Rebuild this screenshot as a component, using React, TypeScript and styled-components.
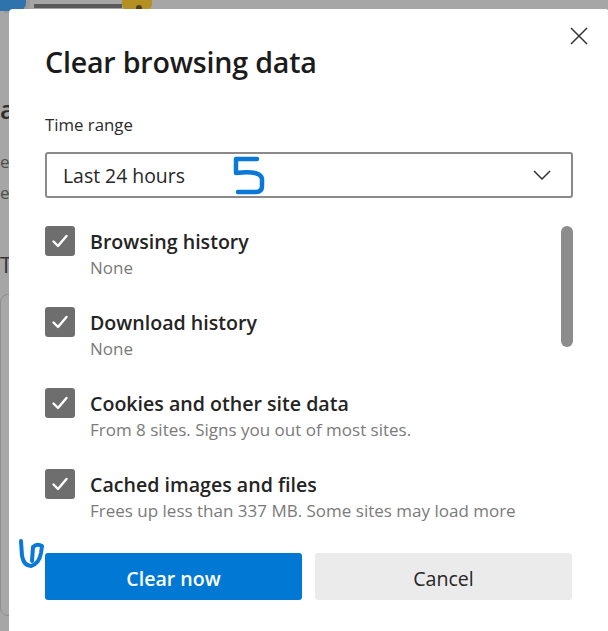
import React from "react";
import styled, { createGlobalStyle } from "styled-components";

const GlobalStyle = createGlobalStyle`
  html, body { margin: 0; padding: 0; background: #a6a6a6; overflow: hidden; }
  * { box-sizing: border-box; }
`;

const FONT = `"Open Sans", "Noto Sans", "Liberation Sans", sans-serif`;

const Page = styled.div`
  position: relative;
  width: 608px;
  height: 631px;
  overflow: hidden;
  background: #a6a6a6;
  font-family: ${FONT};
`;

/* ---------- dimmed page behind the modal ---------- */
const Behind = styled.div`
  display: flex;
  flex-direction: column;
  height: 100%;
`;

const TopStrip = styled.div`
  display: flex;
  align-items: flex-start;
  height: 12px;
`;

const BlueTile = styled.div`
  width: 26px;
  height: 14px;
  margin-top: -3px;
  background: #2f73ad;
  border-radius: 0 0 8px 0;
  box-shadow: 4px 2px 0 0 #9a9a9a;
`;

const DarkBar = styled.div`
  width: 88px;
  height: 4px;
  margin: 4px 0 0 8px;
  background: #5a5a5a;
`;

const YellowTile = styled.div`
  position: relative;
  width: 30px;
  height: 10px;
  background: #b48f22;
  border-radius: 0 0 6px 6px;
  &::after {
    content: "";
    position: absolute;
    left: 14px;
    top: 5px;
    width: 6px;
    height: 5px;
    border-radius: 3px 3px 0 0;
    background: #4a4020;
  }
`;

const SideColumn = styled.div`
  display: flex;
  flex-direction: column;
  width: 200px;
  color: #333;
`;

const SideHeading = styled.div`
  margin-top: 82px;
  font-size: 26px;
  font-weight: 600;
  line-height: 30px;
  white-space: nowrap;
  color: #2e2e2e;
`;

const SideText = styled.div`
  margin-top: 22px;
  font-size: 17px;
  line-height: 31px;
  white-space: nowrap;
  color: #4e4e4e;
`;

const SideLetter = styled.div`
  margin-top: 44px;
  font-size: 22px;
  line-height: 24px;
  color: #333;
`;

const SideCard = styled.div`
  margin-top: 18px;
  width: 200px;
  height: 322px;
  border: 1px solid #8e8e8e;
  border-radius: 8px;
  background: #a8a8a8;
`;

/* ---------- modal ---------- */
const Dialog = styled.div`
  position: absolute;
  left: 9px;
  top: 9px;
  width: 600px;
  height: 640px;
  background: #ffffff;
  border-radius: 4px;
  padding: 0 36px 0 36px;
  display: flex;
  flex-direction: column;
  color: #1f1f1f;
`;

const Header = styled.div`
  display: flex;
  align-items: flex-start;
  justify-content: space-between;
  padding-top: 34px;
`;

const Title = styled.h1`
  margin: 0;
  font-size: 28.6px;
  font-weight: 600;
  line-height: 38px;
  letter-spacing: -0.2px;
  color: #1b1b1b;
`;

const CloseButton = styled.button`
  display: flex;
  align-items: center;
  justify-content: center;
  width: 20px;
  height: 20px;
  margin: -17px -16px 0 0;
  padding: 0;
  border: 0;
  background: transparent;
  color: #333;
`;

const FieldLabel = styled.div`
  margin-top: 33px;
  font-size: 16.8px;
  line-height: 22px;
  color: #2b2b2b;
`;

const SelectBox = styled.div`
  position: relative;
  display: flex;
  align-items: center;
  justify-content: space-between;
  margin-top: 16px;
  height: 46px;
  padding: 0 20px 0 16px;
  border: 2px solid #8a8a8a;
  border-radius: 3px;
  font-size: 19.4px;
  color: #262626;
`;

const Annotation = styled.svg`
  position: absolute;
  overflow: visible;
  pointer-events: none;
`;

const ListArea = styled.div`
  position: relative;
  margin-top: 28px;
  height: 310px;
  overflow: hidden;
`;

const ScrollThumb = styled.div`
  position: absolute;
  right: 0;
  top: 0;
  width: 12px;
  height: 121px;
  border-radius: 6px;
  background: #8c8c8c;
`;

const Item = styled.div`
  display: flex;
  align-items: flex-start;
  gap: 15px;
  height: 81px;
`;

const Check = styled.div`
  flex: none;
  display: flex;
  align-items: center;
  justify-content: center;
  width: 30px;
  height: 30px;
  border-radius: 3px;
  background: #6e6e6e;
`;

const ItemText = styled.div`
  display: flex;
  flex-direction: column;
  padding-top: 1px;
`;

const ItemTitle = styled.div`
  font-size: 19.6px;
  font-weight: 600;
  line-height: 30px;
  color: #242424;
`;

const ItemSub = styled.div`
  font-size: 17px;
  line-height: 22px;
  color: #7a7a7a;
`;

const Buttons = styled.div`
  position: relative;
  display: grid;
  grid-template-columns: 1fr 1fr;
  gap: 13px;
  margin-top: 17px;
  width: 527px;
`;

const Button = styled.button<{ $primary?: boolean }>`
  height: 47px;
  padding: 3px 0 0;
  border: 0;
  border-radius: 3px;
  font-family: ${FONT};
  font-size: 19.6px;
  font-weight: ${(p) => (p.$primary ? 600 : 400)};
  background: ${(p) => (p.$primary ? "#0078d4" : "#ebebeb")};
  color: ${(p) => (p.$primary ? "#ffffff" : "#262626")};
`;

const CheckIcon = () => (
  <svg width="18" height="18" viewBox="0 0 18 18">
    <path d="M2.5 9.5 L7 14 L15.5 4" fill="none" stroke="#fff" strokeWidth="2.4" strokeLinecap="round" strokeLinejoin="round" />
  </svg>
);

const items = [
  { title: "Browsing history", sub: "None" },
  { title: "Download history", sub: "None" },
  { title: "Cookies and other site data", sub: "From 8 sites. Signs you out of most sites." },
  { title: "Cached images and files", sub: "Frees up less than 337 MB. Some sites may load more" },
];

export default function App() {
  return (
    <Page>
      <GlobalStyle />
      <Behind>
        <TopStrip>
          <BlueTile />
          <DarkBar />
          <YellowTile />
        </TopStrip>
        <SideColumn>
          <SideHeading>a</SideHeading>
          <SideText>eb<br />e</SideText>
          <SideLetter>T</SideLetter>
          <SideCard />
        </SideColumn>
      </Behind>

      <Dialog>
        <Header>
          <Title>Clear browsing data</Title>
          <CloseButton aria-label="Close">
            <svg width="18" height="18" viewBox="0 0 18 18">
              <path d="M1 1 L17 17 M17 1 L1 17" stroke="#333" strokeWidth="1.5" fill="none" />
            </svg>
          </CloseButton>
        </Header>

        <FieldLabel>Time range</FieldLabel>
        <SelectBox>
          <span>Last 24 hours</span>
          <svg width="18" height="10" viewBox="0 0 18 10">
            <path d="M1 1 L9 9 L17 1" stroke="#333" strokeWidth="1.5" fill="none" />
          </svg>
          <Annotation width="40" height="40" style={{ left: 185, top: 1 }}>
            <path
              d="M25 4 L4 4 L4 18 Q29 15 30 24 L30 31 Q30 37 24 37 L6 37"
              fill="none"
              stroke="#0a78d7"
              strokeWidth="4.5"
              strokeLinecap="round"
              strokeLinejoin="round"
            />
          </Annotation>
        </SelectBox>

        <ListArea>
          {items.map((it) => (
            <Item key={it.title}>
              <Check>
                <CheckIcon />
              </Check>
              <ItemText>
                <ItemTitle>{it.title}</ItemTitle>
                <ItemSub>{it.sub}</ItemSub>
              </ItemText>
            </Item>
          ))}
          <ScrollThumb />
        </ListArea>

        <Buttons>
          <Annotation width="30" height="32" style={{ left: -26, top: -14 }}>
            <path
              d="M2 2 L3 17 Q5 27 12 27 Q20 25 22 14 L23 7 Q18 4 14 8 L13 22"
              fill="none"
              stroke="#0a78d7"
              strokeWidth="4"
              strokeLinecap="round"
              strokeLinejoin="round"
            />
          </Annotation>
          <Button $primary>Clear now</Button>
          <Button>Cancel</Button>
        </Buttons>
      </Dialog>
    </Page>
  );
}
